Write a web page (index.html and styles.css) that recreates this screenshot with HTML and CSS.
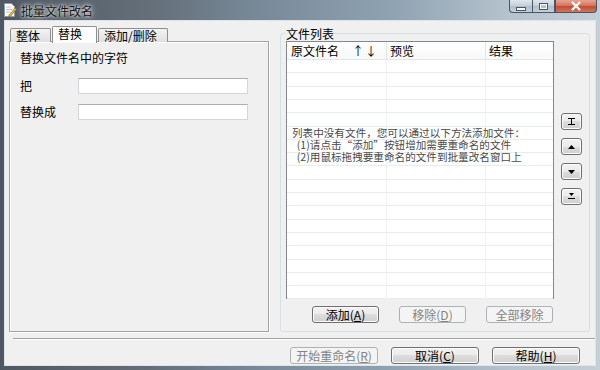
FILE: index.html
```html
<!DOCTYPE html>
<html lang="zh-CN">
<head>
  <meta charset="UTF-8">
  <title>批量文件改名</title>
  <link rel="stylesheet" href="styles.css">
</head>
<body>

<div class="window">
  <div class="titlebar">
    <svg class="app-icon" width="14" height="16" viewBox="0 0 14 16">
      <path d="M1.5 1.5h7l3 3v10h-10z" fill="#fff" stroke="#8a9bb0"/>
      <path d="M3 5h5M3 7.5h6M3 10h4" stroke="#b7c4d3"/>
      <path d="M6 13l6-7 1.5 1.3-6 7-2 .6z" fill="#e8b24a" stroke="#9b6a1c" stroke-width=".7"/>
    </svg>
    <span class="title">批量文件改名</span>
    <div class="controls">
      <span class="ctl ctl-min"><i></i></span>
      <span class="ctl ctl-max"><i></i></span>
      <span class="ctl ctl-close">
        <svg width="12" height="10" viewBox="0 0 12 10"><path d="M2 1l8 8M10 1l-8 8" stroke="#fff" stroke-width="2.4"/></svg>
      </span>
    </div>
  </div>

  <div class="client">
    <div class="main">
      <div class="left">
        <div class="tabs">
          <span class="tab">整体</span>
          <span class="tab active">替换</span>
          <span class="tab">添加/删除</span>
        </div>
        <div class="panel">
          <div class="panel-title">替换文件名中的字符</div>
          <div class="field">
            <label>把</label>
            <input type="text">
          </div>
          <div class="field">
            <label>替换成</label>
            <input type="text">
          </div>
        </div>
      </div>

      <fieldset class="files">
        <legend>文件列表</legend>
        <div class="list-row">
          <div class="list">
            <div class="list-head">
              <span class="col col-name">原文件名<b class="sort">↑↓</b></span>
              <span class="col col-preview">预览</span>
              <span class="col col-result">结果</span>
            </div>
            <div class="list-body">
              <p class="empty">列表中没有文件，您可以通过以下方法添加文件：<br>
              &nbsp;&nbsp;(1)请点击“添加”按钮增加需要重命名的文件<br>
              &nbsp;&nbsp;(2)用鼠标拖拽要重命名的文件到批量改名窗口上</p>
            </div>
          </div>
          <div class="move">
            <button class="btn small">
              <svg width="7" height="7" viewBox="0 0 7 7"><path d="M0 .5h7M0 6.5h7" stroke="#000"/><path d="M3 1h1v5H3z" fill="#000"/></svg>
            </button>
            <button class="btn small">
              <svg width="7" height="4" viewBox="0 0 7 4"><path d="M3.5 0L7 4H0z" fill="#000"/></svg>
            </button>
            <button class="btn small">
              <svg width="7" height="4" viewBox="0 0 7 4"><path d="M0 0h7L3.5 4z" fill="#000"/></svg>
            </button>
            <button class="btn small">
              <svg width="7" height="7" viewBox="0 0 7 7"><path d="M1 0h5L3.5 3z" fill="#000"/><path d="M0 5.5h7" stroke="#000"/></svg>
            </button>
          </div>
        </div>
        <div class="list-buttons">
          <button class="btn">添加(<u>A</u>)</button>
          <button class="btn" disabled>移除(<u>D</u>)</button>
          <button class="btn" disabled>全部移除</button>
        </div>
      </fieldset>
    </div>

    <div class="sep"></div>

    <div class="footer">
      <button class="btn wide" disabled>开始重命名(<u>R</u>)</button>
      <button class="btn wide">取消(<u>C</u>)</button>
      <button class="btn wide">帮助(<u>H</u>)</button>
    </div>
  </div>
</div>

</body>
</html>
```

FILE: styles.css
```css
body { margin: 0; font-family: "Noto Sans CJK SC", "Noto Sans", sans-serif; font-size: 12px; color: #000; }

.window {
  width: 600px; height: 370px; box-sizing: border-box;
  padding: 0 4px 4px 4px;
  background: linear-gradient(90deg, #4f5861 0%, #646f79 25%, #7a8c9c 45%, #8fa2b2 65%, #b5c3cd 85%, #c4cfd6 100%);
  display: flex; flex-direction: column;
}

/* title bar */
.titlebar { height: 20px; display: flex; align-items: center; position: relative; }
.app-icon { margin: 0 4px 0 -1px; }
.title { color: #111; text-shadow: 0 0 6px #fff, 0 0 3px #fff; font-size: 12px; }
.controls { position: absolute; right: -1px; top: 0; display: flex; }
.ctl { height: 13px; display: flex; align-items: center; justify-content: center; border: 1px solid #4a5563; border-top: 0; box-sizing: border-box; }
.ctl-min, .ctl-max { width: 23px; background: linear-gradient(#dfe6ec, #c3cfd9 50%, #aebdc9 50%, #c4d1dc); }
.ctl-min { border-radius: 0 0 0 4px; border-right: 0; }
.ctl-min i { width: 8px; height: 2px; background: #fff; border: 1px solid #4a5563; margin-top: 5px; }
.ctl-max i { width: 7px; height: 5px; border: 1px solid #4a5563; box-shadow: inset 0 0 0 1px #fff; }
.ctl-close { width: 42px; background: linear-gradient(#e8a493, #d3705a 50%, #c04a30 50%, #d0745e); border-radius: 0 0 4px 0; }

/* client area */
.client { flex: 1; background: #f0f0f0; border: 1px solid #dde4ea; padding: 6px 0 0 4px; display: flex; flex-direction: column; }
.main { display: flex; gap: 11px; height: 305px; }

.left { width: 260px; display: flex; flex-direction: column; }
.tabs { display: flex; height: 15px; padding-left: 1px; position: relative; z-index: 1; }
.tab {
  height: 13px; margin-top: 1px; padding: 0 10px 0 5px; border: 1px solid #8e8f8f; border-bottom: 0;
  background: linear-gradient(#f3f3f3, #e0e0e0); line-height: 13px; margin-right: -1px; border-radius: 2px 2px 0 0;
}
.tab.active { margin-top: -1px; height: 16px; background: #fff; padding: 0 14px 0 5px; margin: -1px 1px 0 2px; }
.panel {
  flex: 1; border: 1px solid #a3a3a3; box-shadow: inset 1px 1px 0 #fff, 1px 1px 0 #fff;
  background: #f0f0f0; padding: 9px 0 0 10px; margin-top: -1px;
}
.panel-title { line-height: 14px; }
.field { display: flex; align-items: center; margin-top: 12px; }
.field + .field { margin-top: 9px; }
.field label { width: 58px; }
.field input {
  width: 170px; height: 16px; box-sizing: border-box; border: 1px solid #d2d6da; border-top-color: #abadb3;
  background: #fff; margin: 0; padding: 0;
}

/* file list group */
.files {
  width: 310px; margin: 0; box-sizing: border-box; padding: 1px 0 0 5px;
  border: 1px solid #d5dfe5; border-radius: 3px; display: flex; flex-direction: column;
}
.files legend { padding: 0 1px; margin-left: -1px; line-height: 13px; }
.list-row { display: flex; gap: 7px; }
.list { width: 268px; height: 258px; box-sizing: border-box; border: 1px solid #828790; background: #fff; }
.list-head { display: flex; height: 17px; border-bottom: 1px solid #e5e5e5; background: linear-gradient(#fff, #f7f8f9); line-height: 17px; }
.col { box-sizing: border-box; padding-left: 4px; border-right: 1px solid #e5e5e5; }
.col-name { width: 100px; }
.sort { font-weight: normal; margin-left: 13px; letter-spacing: 1px; }
.col-preview { width: 99px; padding-left: 3px; }
.col-result { flex: 1; border-right: 0; padding-left: 3px; }
.list-body {
  height: 239px; overflow: hidden;
  background:
    linear-gradient(90deg, transparent 99px, #eef0f2 99px, #eef0f2 100px, transparent 100px, transparent 198px, #eef0f2 198px, #eef0f2 199px, transparent 199px),
    repeating-linear-gradient(180deg, transparent 0, transparent 12.3px, #e9ecee 12.3px, #e9ecee 13.3px);
}
.empty { margin: 67px 0 0 5px; line-height: 12px; color: #4a4a4a; font-size: 10.6px; white-space: nowrap; }

.move { display: flex; flex-direction: column; gap: 8px; padding-top: 72px; }

.list-buttons { display: flex; gap: 20px; padding: 7px 0 0 26px; }
.list-buttons .btn { width: 67px; }

/* buttons */
.btn {
  height: 17px; box-sizing: border-box; padding: 0; font: inherit; font-size: 12px; line-height: 14px; color: #000;
  border: 1px solid #707070; border-radius: 3px;
  background: linear-gradient(#f2f2f2, #ebebeb 50%, #dddddd 50%, #cfcfcf);
  box-shadow: inset 0 0 0 1px #fcfcfc;
}
.btn:disabled { border-color: #adb2b5; background: #f4f4f4; color: #838383; box-shadow: none; }
.btn.small { width: 21px; height: 17px; display: flex; align-items: center; justify-content: center; }
.btn u { text-decoration: underline; }

.sep { height: 1px; margin: 6px 0 0 4px; background: #a0a0a0; box-shadow: 0 1px 0 #fff; }

.footer { display: flex; justify-content: flex-end; gap: 13px; padding: 8px 15px 0 0; }
.footer .btn { width: 88px; }
```
